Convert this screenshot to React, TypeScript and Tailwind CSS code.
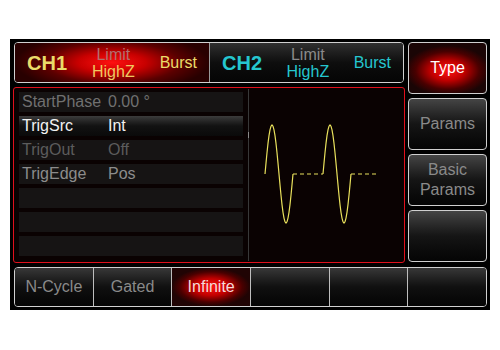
import React from "react";

const font = "font-['Liberation_Sans',Arial,sans-serif]";

interface Row {
    label: string;
    value: string;
    labelColor: string;
    selected?: boolean;
}

const rows: Row[] = [
    { label: "StartPhase", value: "0.00 °", labelColor: "text-[#707070]" },
    { label: "TrigSrc", value: "Int", labelColor: "text-[#f2f2f2]", selected: true },
    { label: "TrigOut", value: "Off", labelColor: "text-[#5c5c5c]" },
    { label: "TrigEdge", value: "Pos", labelColor: "text-[#8c8c8c]" },
    { label: "", value: "", labelColor: "" },
    { label: "", value: "", labelColor: "" },
    { label: "", value: "", labelColor: "" },
];

// one sine period starting at x0 on the centre line
function sinePath(x0: number) {
    const period = 28;
    const amp = 49;
    const cy = 86;
    let d = `M${x0} ${cy}`;
    for (let i = 1; i <= period; i++) {
        const y = cy - amp * Math.sin((i / period) * Math.PI * 2);
        d += ` L${x0 + i} ${y.toFixed(1)}`;
    }
    return d;
}

const Waveform = () => {
    return (
        <svg width="155" height="174" viewBox="0 0 155 174">
            <path d={sinePath(16)} fill="none" stroke="#e8e05c" strokeWidth="1.2" />
            <path d="M44 86 L74 86" stroke="#e8e05c" strokeWidth="1.2" strokeDasharray="4 3" />
            <path d={sinePath(74)} fill="none" stroke="#e8e05c" strokeWidth="1.2" />
            <path d="M102 86 L130 86" stroke="#e8e05c" strokeWidth="1.2" strokeDasharray="4 3" />
        </svg>
    );
};

const SideButton = ({ children, active }: { children?: React.ReactNode; active?: boolean }) => {
    return (
        <div
            className={
                active
                    ? "h-[52px] rounded-[4px] border border-[#cfcfcf] bg-[radial-gradient(ellipse_55%_50%_at_50%_55%,#ff1414_0%,#c00000_40%,#4a0000_75%,#1a0505_100%)] flex items-center justify-center text-center text-[16px] leading-[20px] text-white"
                    : "h-[52px] rounded-[4px] border border-[#cfcfcf] bg-gradient-to-b from-[#454545] via-[#151515] to-[#050505] flex items-center justify-center text-center text-[16px] leading-[20px] text-[#8a8a8a]"
            }
        >
            {children}
        </div>
    );
};

const cells = ["N-Cycle", "Gated", "Infinite", "", "", ""];

export default function App() {
    return (
        <div className={`w-[500px] h-[350px] bg-white pt-[39px] pl-[10px] ${font}`}>
            <div className="w-[480px] h-[271px] bg-black pt-[3px] pl-[3px] flex flex-col">
                <div className="flex">
                    {/* left column */}
                    <div className="w-[392px] flex flex-col">
                        <div className="ml-[1px] w-[390px] h-[41px] rounded-[4px] border border-[#d0d0d0] flex overflow-hidden">
                            <div className="w-[194px] h-full px-3 flex items-center justify-between bg-[radial-gradient(ellipse_50%_75%_at_50%_50%,#ff1010_0%,#c80000_35%,#5a0000_70%,#280000_100%)]">
                                <span className="text-[20px] font-bold text-[#eadc6a]">CH1</span>
                                <div className="flex flex-col items-center leading-[17px] text-[16px] pt-[1px]">
                                    <span className="text-[#b07070]">Limit</span>
                                    <span className="text-[#f0c860]">HighZ</span>
                                </div>
                                <span className="text-[16px] text-[#eadc6a]">Burst</span>
                            </div>
                            <div className="flex-1 h-full px-3 flex items-center justify-between border-l border-[#9a9a9a] bg-gradient-to-b from-[#303030] via-[#0e0e0e] to-[#050505]">
                                <span className="text-[20px] font-bold text-[#25c6cf]">CH2</span>
                                <div className="flex flex-col items-center leading-[17px] text-[16px] pt-[1px]">
                                    <span className="text-[#8a8a8a]">Limit</span>
                                    <span className="text-[#25c6cf]">HighZ</span>
                                </div>
                                <span className="text-[16px] text-[#25c6cf]">Burst</span>
                            </div>
                        </div>

                        <div className="mt-[4px] w-[392px] h-[176px] rounded-[3px] border border-[#e0101c] bg-[#0a0202] flex">
                            <div className="w-[234px] pl-[5px] pt-[4px] flex flex-col gap-[4px]">
                                {rows.map((row, index) => (
                                    <div
                                        key={index}
                                        className={
                                            row.selected
                                                ? "w-[224px] h-[20px] flex items-center pl-[3px] text-[16px] bg-gradient-to-b from-[#3c3c3c] via-[#121212] to-[#0a0a0a]"
                                                : "w-[224px] h-[20px] flex items-center pl-[3px] text-[16px] bg-[#161414]"
                                        }
                                    >
                                        <span className={`w-[86px] ${row.labelColor}`}>{row.label}</span>
                                        <span className={row.labelColor}>{row.value}</span>
                                    </div>
                                ))}
                            </div>
                            <div className="w-[1px] my-[1px] bg-[#383838] flex flex-col">
                                <div className="mt-[43px] h-[6px] bg-[#8a8a8a]" />
                            </div>
                            <div className="flex-1">
                                <Waveform />
                            </div>
                        </div>
                    </div>

                    {/* right column */}
                    <div className="ml-[3px] w-[79px] flex flex-col gap-[4px]">
                        <SideButton active>Type</SideButton>
                        <SideButton>Params</SideButton>
                        <SideButton>
                            <span>
                                Basic
                                <br />
                                Params
                            </span>
                        </SideButton>
                        <SideButton />
                    </div>
                </div>

                <div className="mt-[4px] ml-[1px] w-[473px] h-[40px] rounded-[4px] border border-[#d0d0d0] flex overflow-hidden">
                    {cells.map((cell, index) => (
                        <div
                            key={index}
                            className={
                                cell === "Infinite"
                                    ? "flex-1 h-full border-l border-[#bdbdbd] flex items-center justify-center text-[16px] text-[#f4dada] bg-[radial-gradient(ellipse_50%_50%_at_50%_50%,#ff1414_0%,#c00000_45%,#4a0000_80%,#200404_100%)]"
                                    : index === 0
                                    ? "flex-1 h-full flex items-center justify-center text-[16px] text-[#8a8a8a] bg-gradient-to-b from-[#383838] via-[#101010] to-[#050505]"
                                    : "flex-1 h-full border-l border-[#bdbdbd] flex items-center justify-center text-[16px] text-[#8a8a8a] bg-gradient-to-b from-[#383838] via-[#101010] to-[#050505]"
                            }
                        >
                            {cell}
                        </div>
                    ))}
                </div>
            </div>
        </div>
    );
}
